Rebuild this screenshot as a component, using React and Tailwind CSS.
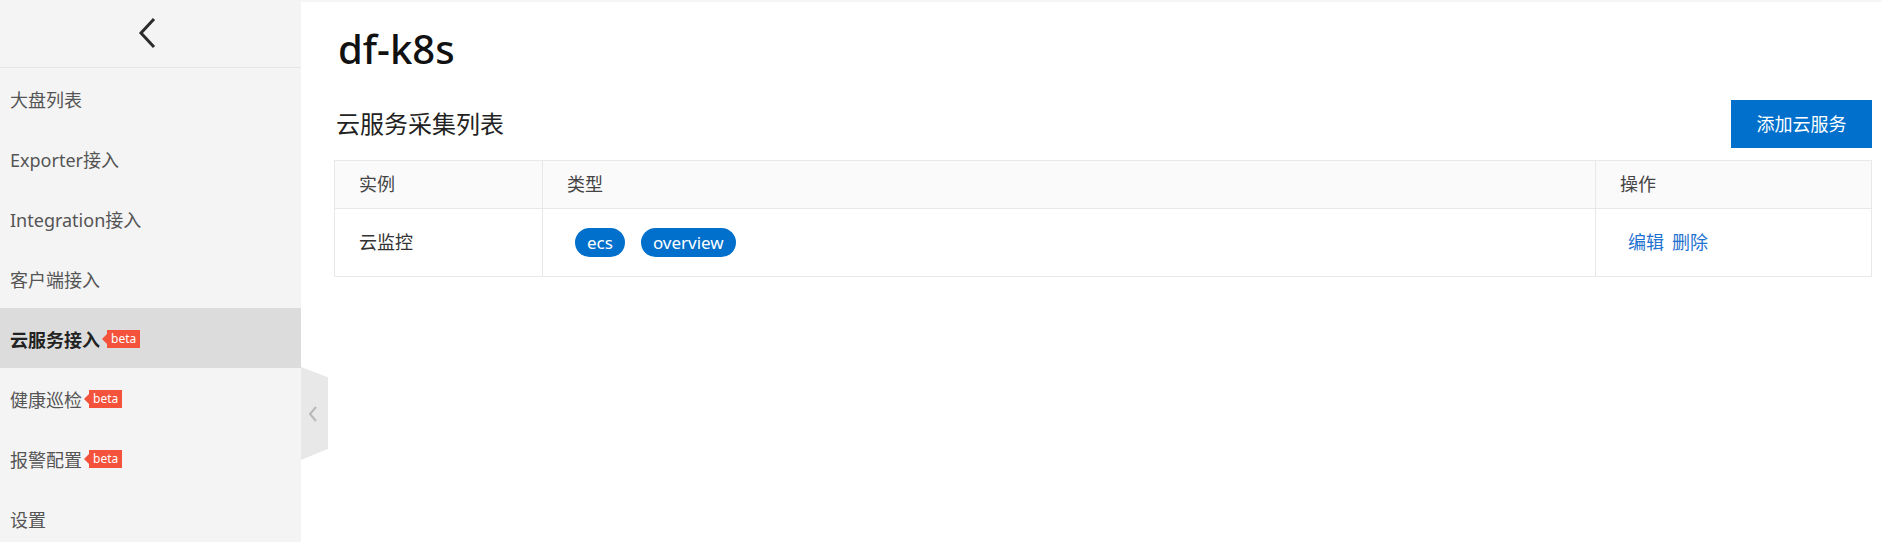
import React from "react";

const font = { fontFamily: '"Noto Sans", "Noto Sans CJK SC", sans-serif' };

function Beta() {
  return (
    <span className="ml-[2px] mt-[2px] flex items-center self-start">
      <span className="h-0 w-0 border-y-[5px] border-r-[5px] border-y-transparent border-r-[#f4523b]" />
      <span className="flex h-[18px] items-center bg-[#f4523b] px-[4px] text-[12px] font-normal leading-none text-white">
        beta
      </span>
    </span>
  );
}

const items = [
  { label: "大盘列表" },
  { label: "Exporter接入" },
  { label: "Integration接入" },
  { label: "客户端接入" },
  { label: "云服务接入", beta: true, active: true },
  { label: "健康巡检", beta: true },
  { label: "报警配置", beta: true },
  { label: "设置" },
];

export default function App() {
  return (
    <div className="flex h-[542px] w-full overflow-hidden bg-white" style={font}>
      <aside className="flex w-[301px] shrink-0 flex-col bg-[#f4f4f4]">
        <div className="flex h-[68px] shrink-0 items-center justify-center border-b border-[#e5e5e5]">
          <svg width="20" height="32" viewBox="0 0 20 32" className="ml-[-6px] mt-[-2px]">
            <path d="M16 2 L3 16 L16 30" fill="none" stroke="#2b2b2b" strokeWidth="3" />
          </svg>
        </div>
        {items.map((it) => (
          <div
            key={it.label}
            className={
              it.active
                ? "flex h-[60px] shrink-0 items-center bg-[#dcdcdc] pl-[10px] pt-[4px]"
                : "flex h-[60px] shrink-0 items-center pl-[10px] pt-[4px]"
            }
          >
            <span className="flex items-start">
              <span
                className={
                  it.active
                    ? "text-[18px] font-bold leading-[24px] text-[#222]"
                    : "text-[18px] leading-[24px] text-[#555]"
                }
              >
                {it.label}
              </span>
              {it.beta && <Beta />}
            </span>
          </div>
        ))}
      </aside>

      <main className="relative flex-1 border-t-2 border-[#f6f6f6] pl-[33px] pr-[10px]">
        <div className="absolute left-0 top-[365px] flex h-[93px] w-[27px] items-center justify-center bg-[#e8e8e8] [clip-path:polygon(0_0,100%_11%,100%_88%,0_100%)]">
          <svg width="10" height="18" viewBox="0 0 10 18" className="ml-[-4px]">
            <path d="M8 2 L2 9 L8 16" fill="none" stroke="#b8b8b8" strokeWidth="2" />
          </svg>
        </div>

        <h1 className="ml-[4px] mt-[23px] text-[40px] font-medium leading-[48px] text-[#111]">df-k8s</h1>

        <div className="mt-[27px] flex items-center justify-between">
          <h2 className="ml-[2px] text-[24px] font-normal leading-[30px] text-[#222]">云服务采集列表</h2>
          <button className="flex h-[48px] w-[141px] items-center justify-center bg-[#0070cc] text-[18px] text-white">
            添加云服务
          </button>
        </div>

        <div className="mt-[12px] w-full border border-[#e8e8e8]">
          <div className="grid h-[48px] grid-cols-[208px_1fr_275px] border-b border-[#e8e8e8] bg-[#fafafa] text-[18px] text-[#444]">
            <div className="flex items-center border-r border-[#e8e8e8] pl-[24px]">实例</div>
            <div className="flex items-center border-r border-[#e8e8e8] pl-[24px]">类型</div>
            <div className="flex items-center pl-[24px]">操作</div>
          </div>
          <div className="grid h-[67px] grid-cols-[208px_1fr_275px] text-[18px] text-[#333]">
            <div className="flex items-center border-r border-[#e8e8e8] pl-[24px]">云监控</div>
            <div className="flex items-center gap-[16px] border-r border-[#e8e8e8] pl-[32px]">
              <span className="flex h-[29px] items-center rounded-full bg-[#0070cc] px-[12px] text-[17px] text-white">ecs</span>
              <span className="flex h-[29px] items-center rounded-full bg-[#0070cc] px-[12px] text-[17px] text-white">overview</span>
            </div>
            <div className="flex items-center gap-[8px] pl-[32px] text-[#1f72cf]">
              <span>编辑</span>
              <span>删除</span>
            </div>
          </div>
        </div>
      </main>
    </div>
  );
}
